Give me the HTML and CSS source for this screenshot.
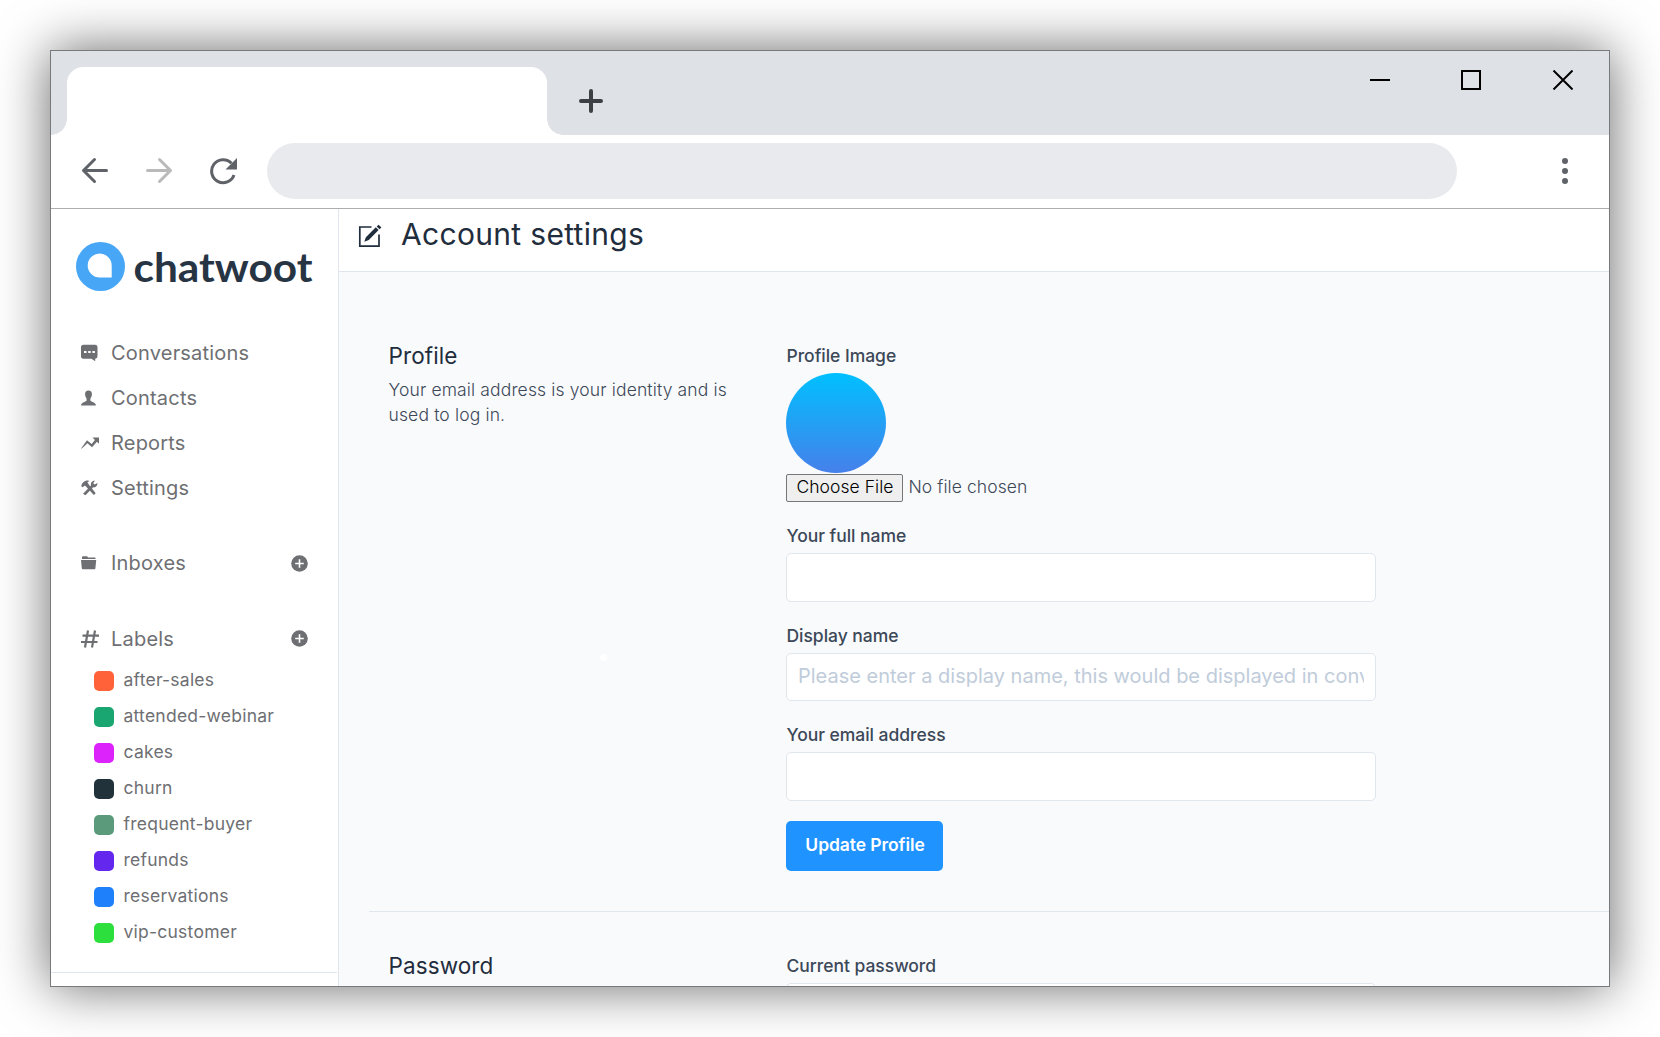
FILE: index.html
```html
<!DOCTYPE html>
<html lang="en">
<head>
<meta charset="utf-8">
<title>Account settings</title>
<link rel="stylesheet" href="styles.css">
</head>
<body>
<div class="window">
  <div class="tabstrip">
    <div class="tab"></div>
    <svg class="new-tab" width="24" height="24" viewBox="0 0 24 24"><path d="M12 2v20M2 12h20" stroke="#3c4043" stroke-width="4" stroke-linecap="round"/></svg>
    <svg class="controls" width="203" height="20" viewBox="0 0 203 20" fill="none" stroke="#000" stroke-width="2"><path d="M0 10h20M92 1h18v18H92zM183.500.500l19 19M202.500.500l-19 19"/></svg>
  </div>
  <div class="toolbar">
    <svg class="tool" width="28" height="28" viewBox="0 0 28 28" fill="none" stroke="#5f6368" stroke-width="3" stroke-linecap="round" stroke-linejoin="round"><path d="M25.500 13.500H2.500M13.500 2.500L2.500 13.500l11 11"/></svg>
    <svg class="tool" width="28" height="28" viewBox="0 0 28 28" fill="none" stroke="#bababa" stroke-width="3" stroke-linecap="round" stroke-linejoin="round"><path d="M2.500 13.500h23M14.500 2.500l11 11-11 11"/></svg>
    <svg class="tool" width="28" height="28" viewBox="0 0 28 28" fill="none"><path d="M22.500 6.300A11.500 11.500 0 1 0 25 18" stroke="#5f6368" stroke-width="3"/><path d="M28 1v11.500H16.500z" fill="#5f6368"/></svg>
    <div class="address"></div>
    <svg class="menu" width="6" height="26" viewBox="0 0 6 26" fill="#5f6368"><circle cx="3" cy="3" r="3"/><circle cx="3" cy="13" r="3"/><circle cx="3" cy="23" r="3"/></svg>
  </div>
  <div class="page">
    <aside class="sidebar">
      <svg class="logo" width="240" height="50" viewBox="0 0 240 50">
        <circle cx="24.500" cy="24.500" r="24.500" fill="#47a7f6"/>
        <path d="M35.700 35.500V23.700A12 12 0 1 0 23.700 35.500z" fill="#fff"/>
        <text class="wordmark" x="57.500" y="39.500" textLength="179" lengthAdjust="spacingAndGlyphs">chatwoot</text>
      </svg>
      <nav class="nav">
        <a class="nav-item"><svg class="icon" viewBox="0 0 18 18"><path fill-rule="evenodd" d="M2.500.800h11.500a2.500 2.500 0 0 1 2.500 2.500v9a2.500 2.500 0 0 1-2.300 2.500v2.400L10.500 14.800h-8A2.500 2.500 0 0 1 0 12.300v-9A2.500 2.500 0 0 1 2.500.800zM3 7v2h2.500V7zm4.200 0v2h2.500V7zm4.200 0v2h2.500V7z"/></svg>Conversations</a>
        <a class="nav-item"><svg class="icon" viewBox="0 0 18 18"><path d="M7.500 1.500c2.600 0 3.700 1.700 3.400 4.200-.2 1.800-.9 2.800-1.500 3.700v2c0 1.200 5.600 1.600 5.600 5.100H0c0-3.500 5.600-3.900 5.600-5.100v-2C5 8.500 4.300 7.500 4.100 5.700 3.800 3.200 4.900 1.500 7.500 1.500z"/></svg>Contacts</a>
        <a class="nav-item"><svg class="icon" viewBox="0 0 18 18"><path d="M11.500 3.500H18v6.300l-2-2-5 5.400-4.600-4L.8 14.500 0 14.500 6 6.200l4.700 3.900 3.200-4z"/></svg>Reports</a>
        <a class="nav-item"><svg class="icon" viewBox="0 0 18 18"><path d="M.3 7.200C.8 4 3.300 1.400 7 1.500L8.500 2 6.400 3.300l1.400 2.100L14.700 14.200 12.800 16 5 7.600 3.700 6.400 1.800 8.300zM10 6.600c-.5-2.700 1-5 4-5.100L12.200 4.300l1.500 1.300 2.700-1.500c.3 2.900-1.700 4.700-4.300 4.200L4.500 16.300 2 14.800z"/></svg>Settings</a>
        <a class="nav-item spaced"><svg class="icon" viewBox="0 0 18 18"><path d="M1 4V3.200A1 1 0 0 1 2 2.200h4l1.200 1.200h6.600a.9.9 0 0 1 .8.800v.8H1zM0 6h15.200l-.8 8.200a1 1 0 0 1-1 1H1.800a1 1 0 0 1-1-1z"/></svg>Inboxes<svg class="add" viewBox="0 0 17 17"><circle cx="8.500" cy="8.500" r="8.300"/><path d="M8.500 4.200v8.600M4.200 8.500h8.600" stroke="#fff" stroke-width="1.600"/></svg></a>
        <a class="nav-item spaced"><svg class="icon" viewBox="0 0 18 18"><path d="M7 .5L4 17.500M14 .5l-3 17M1.500 5.700H18M0 12h16.500" fill="none" stroke="#6e6f73" stroke-width="2.200"/></svg>Labels<svg class="add" viewBox="0 0 17 17"><circle cx="8.500" cy="8.500" r="8.300"/><path d="M8.500 4.200v8.600M4.200 8.500h8.600" stroke="#fff" stroke-width="1.600"/></svg></a>
      </nav>
      <ul class="labels">
        <li><i class="swatch orange"></i>after-sales</li>
        <li><i class="swatch green"></i>attended-webinar</li>
        <li><i class="swatch magenta"></i>cakes</li>
        <li><i class="swatch navy"></i>churn</li>
        <li><i class="swatch sage"></i>frequent-buyer</li>
        <li><i class="swatch violet"></i>refunds</li>
        <li><i class="swatch blue"></i>reservations</li>
        <li><i class="swatch lime"></i>vip-customer</li>
      </ul>
      <div class="sidebar-foot"></div>
    </aside>
    <main class="main">
      <header class="header">
        <svg class="edit" width="24" height="24" viewBox="0 0 24 24"><path d="M13.500 3H1.800v19.200H21V10.500" fill="none" stroke="#1f2d3d" stroke-width="1.700"/><path d="M6.300 17.800l1.600-4.600L17.800 3.300l2.800 2.800L10.800 15.900zM18.700 2.400L20.600.8l2.800 2.600-1.900 1.800z" fill="#1f2d3d"/></svg>
        <h1>Account settings</h1>
      </header>
      <div class="content">
        <section class="section">
          <div class="intro">
            <h2>Profile</h2>
            <p>Your email address is your identity and is used to log in.</p>
            <span class="dot"></span>
          </div>
          <form class="form">
            <div class="field">
              <label>Profile Image</label>
              <div class="avatar"></div>
              <div class="file"><button type="button">Choose File</button><span>No file chosen</span></div>
            </div>
            <div class="field"><label>Your full name</label><input type="text"></div>
            <div class="field"><label>Display name</label><input class="compact" type="text" placeholder="Please enter a display name, this would be displayed in conversations"></div>
            <div class="field"><label>Your email address</label><input type="text"></div>
            <button class="submit" type="button">Update Profile</button>
          </form>
        </section>
        <section class="section">
          <div class="intro"><h2>Password</h2></div>
          <form class="form">
            <div class="field"><label>Current password</label><input type="text"></div>
          </form>
        </section>
      </div>
    </main>
  </div>
</div>
</body>
</html>
```
FILE: styles.css
```css
* { box-sizing: border-box; }
body {
  margin: 0;
  padding: 50px;
  height: 1037px;
  overflow: hidden;
  background: #fff;
  font-family: Inter, "Liberation Sans", sans-serif;
  font-size: 17.5px;
}
h1, h2, p, ul { margin: 0; padding: 0; font-weight: 400; }
svg { display: block; flex: none; }

.window {
  width: 1560px;
  height: 937px;
  display: flex;
  flex-direction: column;
  overflow: hidden;
  background: #fff;
  border: 1px solid #777a7d;
  box-shadow: 0 0 50px rgba(0, 0, 0, .6);
}

/* browser frame */
.tabstrip {
  height: 84px;
  flex: none;
  display: flex;
  align-items: flex-start;
  padding: 16px 36px 0 16px;
  background: #dee1e6;
}
.tab {
  position: relative;
  width: 480px;
  height: 68px;
  background: #fff;
  border-radius: 16px 16px 0 0;
}
.tab::before, .tab::after {
  content: "";
  position: absolute;
  bottom: 0;
  width: 16px;
  height: 16px;
}
.tab::before { right: 100%; background: radial-gradient(circle at 0 0, transparent 15.500px, #fff 16px); }
.tab::after { left: 100%; background: radial-gradient(circle at 100% 0, transparent 15.500px, #fff 16px); }
.new-tab { margin: 22px 0 0 32px; }
.controls { margin: 3px 0 0 auto; }
.toolbar {
  height: 74px;
  flex: none;
  display: flex;
  align-items: center;
  gap: 36px;
  padding: 0 41px 1px 30px;
  border-bottom: 1px solid #adadad;
}
.address {
  width: 1190px;
  height: 56px;
  margin-left: -6px;
  border-radius: 28px;
  background: #e8eaed;
}
.menu { margin-left: auto; }

.page { flex: 1; min-height: 0; display: flex; }

/* sidebar */
.sidebar {
  width: 288px;
  flex: none;
  display: flex;
  flex-direction: column;
  padding-top: 33px;
  border-right: 1px solid #e0e6ed;
  color: #6e6f73;
}
.logo { margin-left: 25px; overflow: visible; }
.wordmark { font-family: Lato, sans-serif; font-size: 41px; font-weight: 700; fill: #273444; }
.nav { margin-top: 38px; padding: 0 30.500px 0 30px; }
.nav-item {
  height: 45px;
  display: flex;
  align-items: center;
  font-size: 20px;
  letter-spacing: .2px;
}
.nav-item.spaced { margin-top: 30.500px; }
.icon { width: 18px; height: 18px; margin-right: 12px; fill: #6e6f73; }
.add { width: 17px; height: 17px; margin-left: auto; fill: #6e6f73; }
.labels { margin-top: 2px; padding-left: 43px; list-style: none; }
.labels li {
  height: 36px;
  display: flex;
  align-items: center;
  padding-bottom: 2px;
  line-height: 34px;
  letter-spacing: .24px;
}
.swatch { width: 20px; height: 20px; margin: 2px 9.500px 0 0; border-radius: 5px; }
.orange { background: #ff6138; }
.green { background: #1aa670; }
.magenta { background: #dc23fb; }
.navy { background: #21323a; }
.sage { background: #5c9a7c; }
.violet { background: #6427ee; }
.blue { background: #1f80fc; }
.lime { background: #2cdf3c; }
.sidebar-foot { margin: auto 1px 0 0; height: 14px; border-top: 1px solid #e0e6ed; }

/* settings page */
.main { flex: 1; display: flex; flex-direction: column; min-width: 0; background: #f9fafc; }
.header {
  height: 63px;
  flex: none;
  display: flex;
  align-items: flex-start;
  padding: 7px 18.500px;
  background: #fff;
  border-bottom: 1px solid #e0e6ed;
  color: #1f2d3d;
}
.edit { margin-top: 8px; }
.header h1 { margin-left: 19.500px; font-size: 30px; line-height: 36px; letter-spacing: .32px; }
.content { padding: 30px 0 0 30px; }
.section {
  display: grid;
  grid-template-columns: 372.500px 590px;
  column-gap: 25px;
  padding: 40px 20px 40px 19.500px;
  border-bottom: 1px solid #e0e6ed;
}
.intro { position: relative; }
.intro h2 { font-size: 22.500px; line-height: 28px; letter-spacing: .1px; color: #1f2d3d; }
.intro p { width: 350px; margin-top: 7px; line-height: 25px; font-weight: 300; letter-spacing: .14px; color: #3c4858; }
.dot {
  position: absolute;
  left: 211px;
  top: 312px;
  width: 7px;
  height: 7px;
  border-radius: 50%;
  background: #fff;
}
.form { display: flex; flex-direction: column; align-items: flex-start; padding-top: 3px; }
.field { width: 100%; display: flex; flex-direction: column; margin-bottom: 23px; }
.field:nth-last-child(2) { margin-bottom: 20px; }
.field label { margin: 0 0 6px .500px; line-height: 22px; font-weight: 500; letter-spacing: -.03px; color: #3c4858; }
.field input {
  width: 590px;
  height: 49px;
  padding: 0 11px 3px;
  border: 1px solid #e0e6ed;
  border-radius: 5px;
  background: #fff;
  font: 20px Inter, sans-serif;
}
.field input.compact { height: 48px; }
.field input::placeholder { color: #c0ccda; opacity: 1; }
.avatar { width: 100px; height: 100px; border-radius: 50%; background: linear-gradient(#00c0ff, #4680ea); }
.file { display: flex; height: 28px; margin-top: 1px; line-height: 26px; font-weight: 300; letter-spacing: .08px; color: #3c4858; }
.file button {
  width: 117px;
  height: 28px;
  margin-right: 5.500px;
  padding: 0 0 3px 1px;
  border: 1px solid #767676;
  border-radius: 2px;
  background: #efefef;
  font: 300 17.5px Inter, sans-serif;
  letter-spacing: .05px;
  color: #000;
}
.submit {
  width: 157px;
  height: 50px;
  padding: 0 0 4px 1px;
  border: 0;
  border-radius: 5px;
  background: #1f93ff;
  font: 600 17.5px Inter, sans-serif;
  letter-spacing: -.08px;
  color: #fff;
}
```
